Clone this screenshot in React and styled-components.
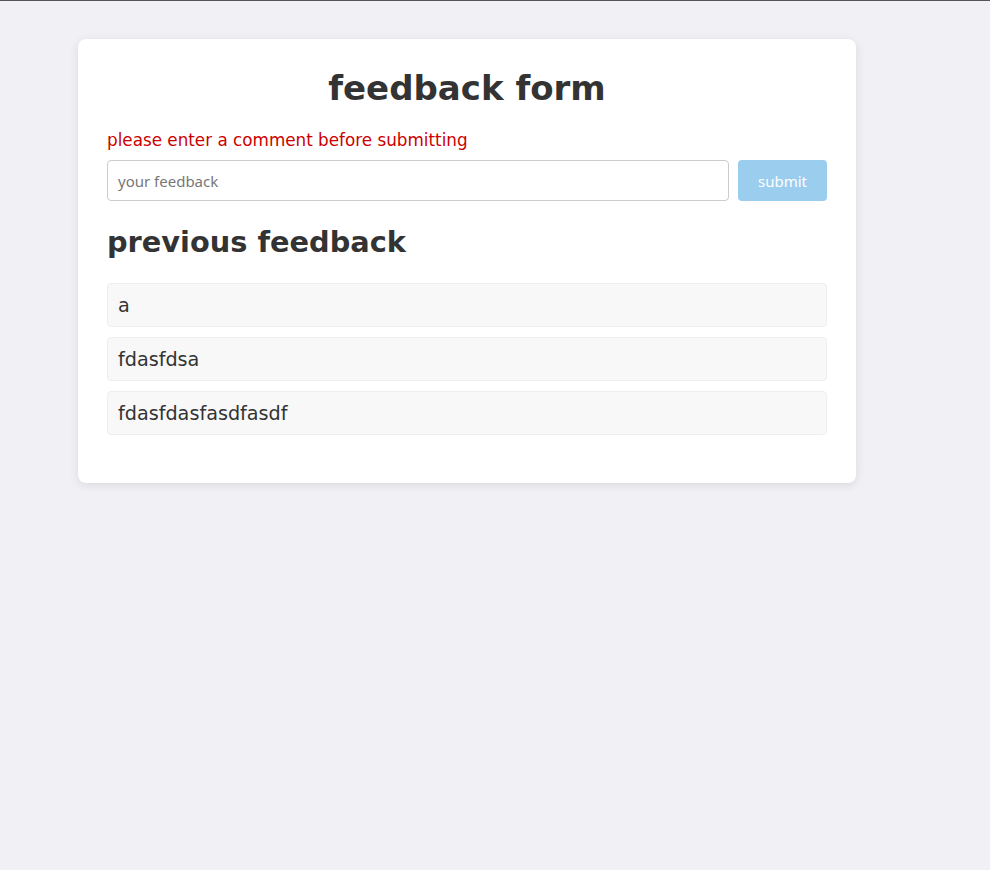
import React from "react"
import styled, { createGlobalStyle } from "styled-components"

const GlobalStyle = createGlobalStyle`
  html, body {
    margin: 0;
    padding: 0;
    background: #f0f0f5;
    font-family: "DejaVu Sans", sans-serif;
    color: #333;
  }
`

const Page = styled.div`
  border-top: 1px solid #555;
  min-height: 869px;
  padding: 38px 0 0 78px;
  box-sizing: border-box;
`

const Card = styled.div`
  width: 778px;
  box-sizing: border-box;
  background: #fff;
  border-radius: 8px;
  box-shadow: 0 2px 10px rgba(0, 0, 0, 0.1);
  padding: 29px 29px 48px;
`

const Title = styled.h1`
  margin: 0 0 21px;
  text-align: center;
  font-size: 34px;
  line-height: 40px;
  font-weight: bold;
  color: #333;
`

const Error = styled.div`
  color: #cc0000;
  font-size: 16.8px;
  line-height: 22px;
  margin-bottom: 9px;
`

const FormRow = styled.form`
  display: flex;
  gap: 9px;
  margin: 0;
`

const Input = styled.input`
  flex: 1;
  height: 41px;
  box-sizing: border-box;
  border: 1px solid #ccc;
  border-radius: 4px;
  padding: 0 10px;
  font-family: "Noto Sans", sans-serif;
  font-size: 15px;
  color: #333;
  outline: none;

  &::placeholder {
    color: #777;
  }
`

const Button = styled.button`
  width: 89px;
  height: 41px;
  border: none;
  border-radius: 4px;
  background: #9bcdef;
  color: #fff;
  font-family: "Noto Sans", sans-serif;
  font-size: 15px;
  cursor: not-allowed;
`

const SubTitle = styled.h2`
  margin: 23px 0 23px;
  font-size: 28.8px;
  line-height: 36px;
  font-weight: bold;
  color: #333;
`

const List = styled.ul`
  list-style: none;
  margin: 0;
  padding: 0;
  display: flex;
  flex-direction: column;
  gap: 10px;
`

const Item = styled.li`
  height: 44px;
  box-sizing: border-box;
  display: flex;
  align-items: center;
  padding: 0 10px;
  background: #f8f8f8;
  border: 1px solid #eee;
  border-radius: 4px;
  font-size: 19.2px;
  color: #333;
`

const feedback = ["a", "fdasfdsa", "fdasfdasfasdfasdf"]

const App = () => (
  <>
    <GlobalStyle />
    <Page>
      <Card>
        <Title>feedback form</Title>
        <Error>please enter a comment before submitting</Error>
        <FormRow onSubmit={e => e.preventDefault()}>
          <Input placeholder="your feedback" />
          <Button type="submit">submit</Button>
        </FormRow>
        <SubTitle>previous feedback</SubTitle>
        <List>
          {feedback.map((text, i) => (
            <Item key={i}>{text}</Item>
          ))}
        </List>
      </Card>
    </Page>
  </>
)

export default App
